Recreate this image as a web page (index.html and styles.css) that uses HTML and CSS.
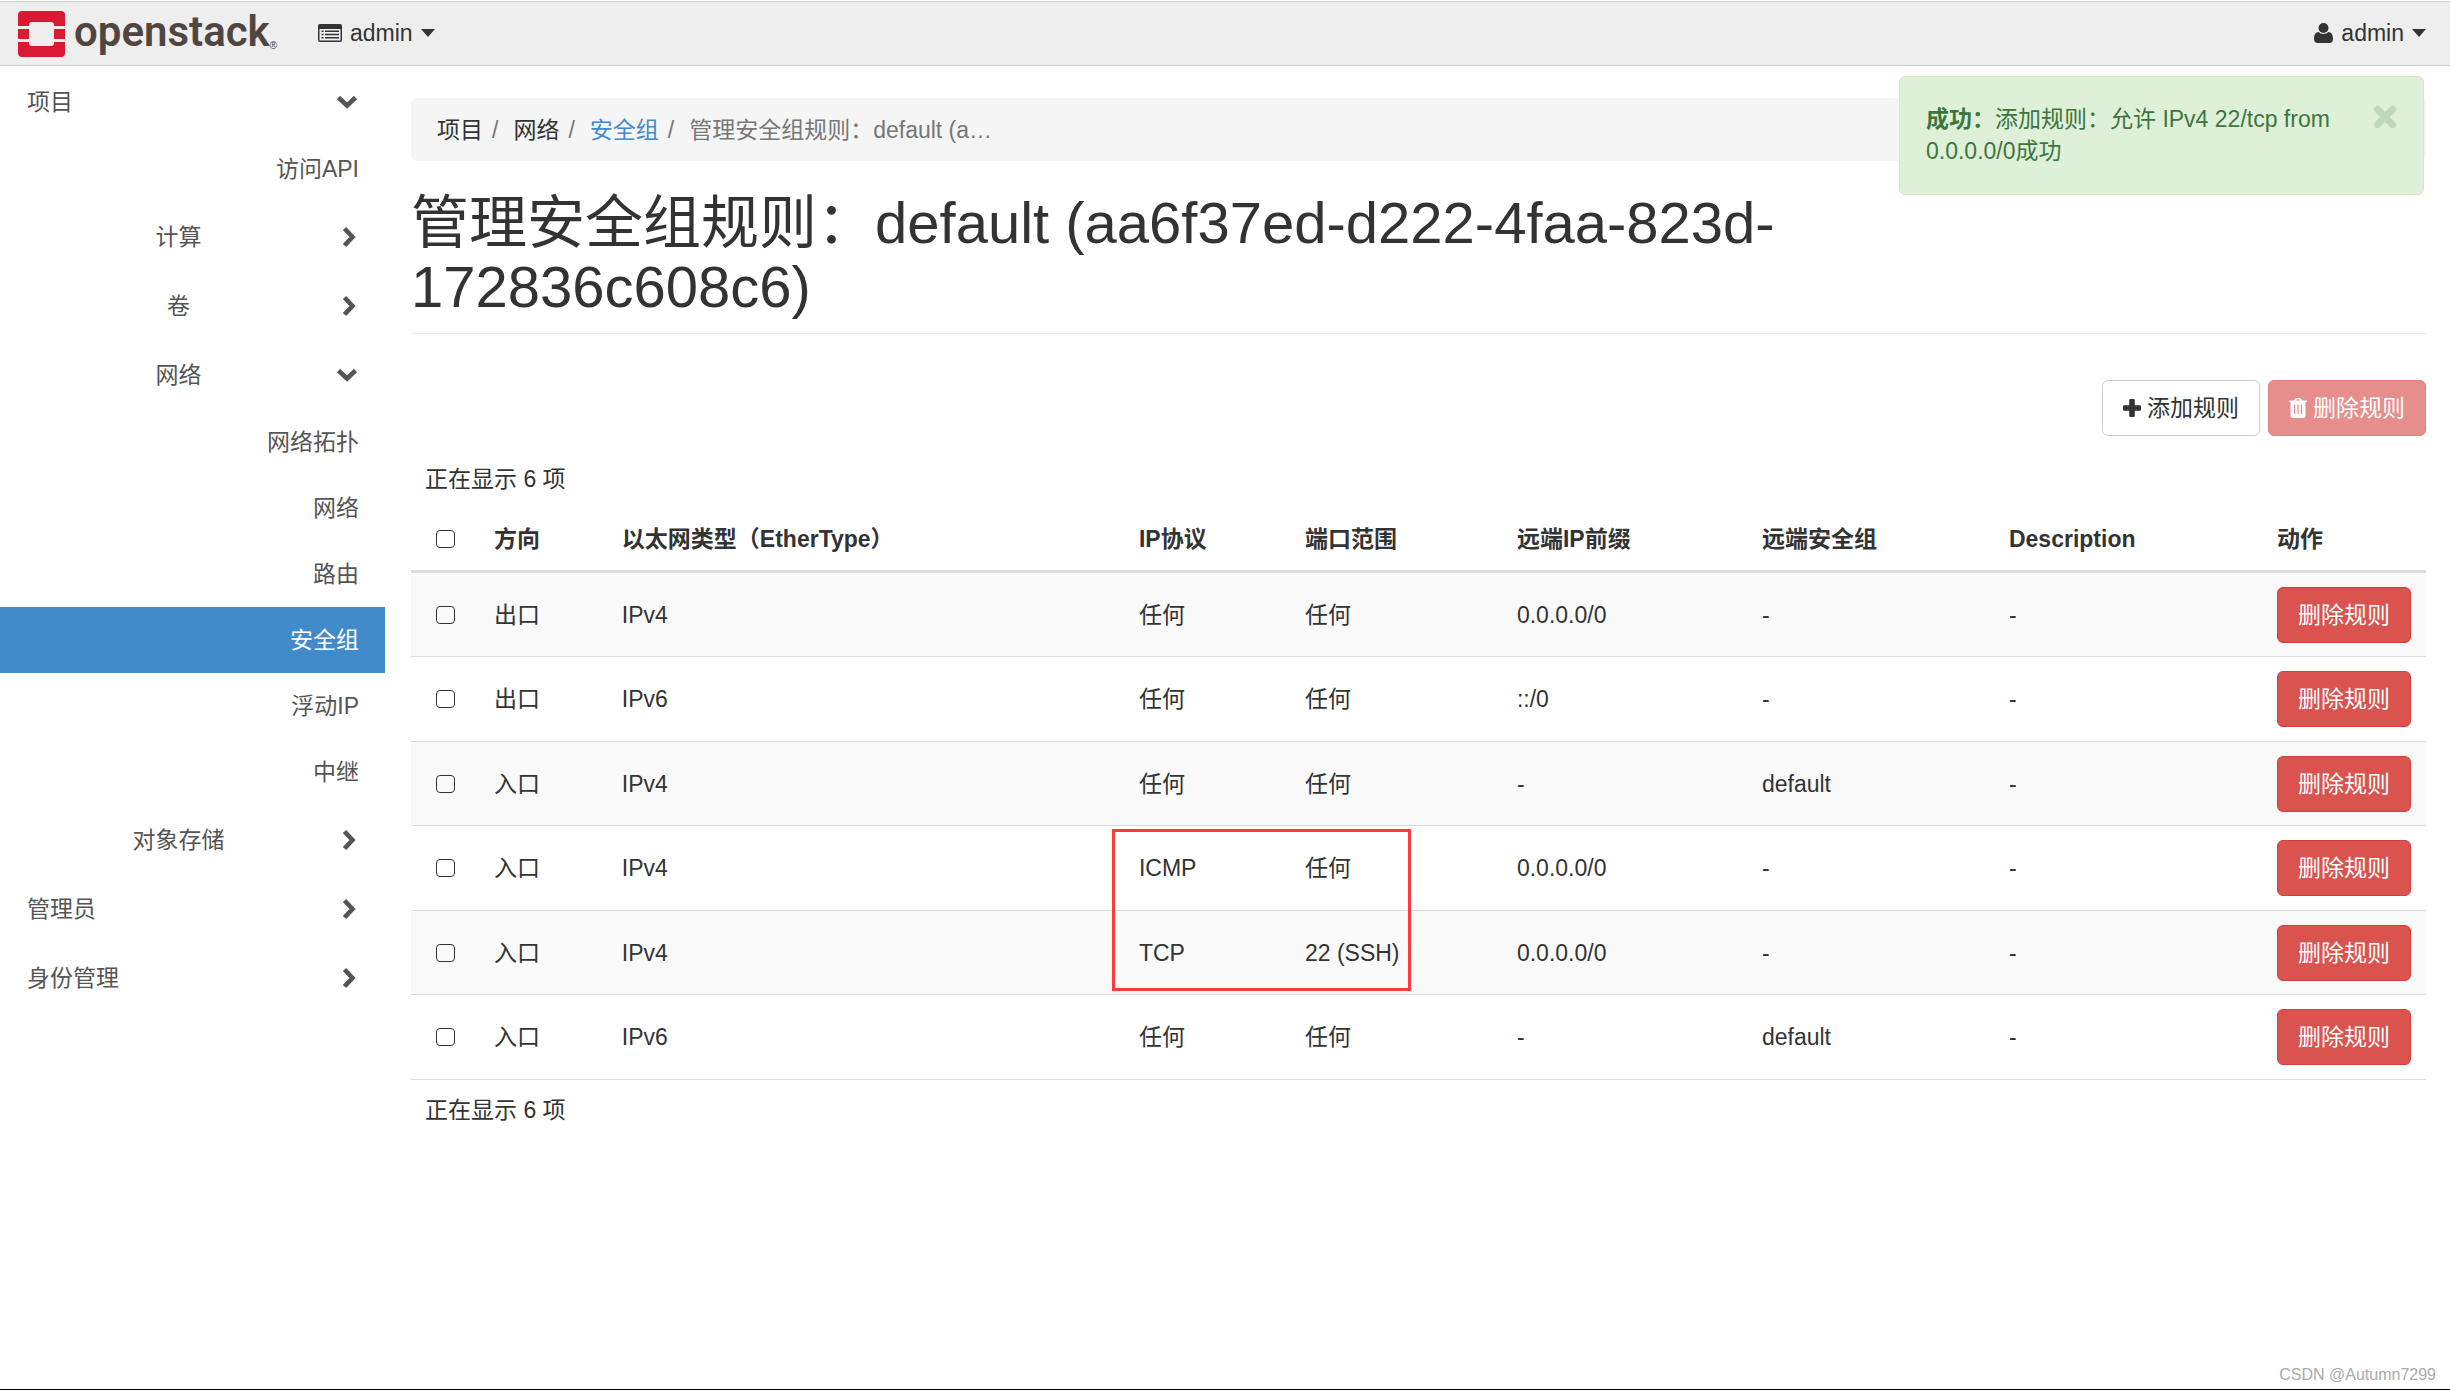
FILE: index.html
```html
<!DOCTYPE html>
<html lang="zh-CN">
<head>
<meta charset="utf-8">
<meta name="viewport" content="width=device-width, initial-scale=1">
<title>管理安全组规则 - OpenStack Dashboard</title>
<link rel="stylesheet" href="styles.css">
</head>
<body>
<svg class="sprite" aria-hidden="true">
  <symbol id="right" viewBox="0 0 14 22"><path d="M2.5 2.5 10.5 11l-8 8.500" fill="none" stroke="currentColor" stroke-width="4.600"/></symbol>
  <symbol id="down" viewBox="0 0 22 14"><path d="M2.500 2.500 11 10.500l8.500-8" fill="none" stroke="currentColor" stroke-width="4.600"/></symbol>
  <symbol id="caret" viewBox="0 0 14 8"><path d="M0 0h14L7 8z" fill="currentColor"/></symbol>
</svg>

<header class="topbar">
  <a class="brand" href="#" aria-label="openstack">
    <svg class="brand-mark" viewBox="0 0 47 46" aria-hidden="true">
      <path fill="#da1a32" d="M4 0h39a4 4 0 0 1 4 4v11H36v-1a3 3 0 0 0-3-3H14a3 3 0 0 0-3 3v1H0V4a4 4 0 0 1 4-4zM0 18h11v10H0zM36 18h11v10H36zM0 31h11v1a3 3 0 0 0 3 3h19a3 3 0 0 0 3-3v-1h11v11a4 4 0 0 1-4 4H4a4 4 0 0 1-4-4z"/>
    </svg>
    <span class="brand-name">openstack</span><span class="brand-reg">®</span>
  </a>
  <button class="menu" type="button">
    <svg class="icon-list" viewBox="0 0 24 18" aria-hidden="true">
      <path fill="currentColor" fill-rule="evenodd" d="M2 0h20a2 2 0 0 1 2 2v14a2 2 0 0 1-2 2H2a2 2 0 0 1-2-2V2a2 2 0 0 1 2-2zM1.500 5v11q0 .5.5.5h20q.5 0 .5-.5V5zM3.500 6.500h2V8h-2zM7 6.500h14V8H7zM3.500 9.800h2v1.500h-2zM7 9.800h14v1.500H7zM3.500 13h2v1.500h-2zM7 13h14v1.500H7z"/>
    </svg>
    admin
    <svg class="caret" aria-hidden="true"><use href="#caret"/></svg>
  </button>
  <button class="menu menu-user" type="button">
    <svg class="icon-user" viewBox="0 0 19 20" aria-hidden="true">
      <path fill="currentColor" d="M9.500 0a5 5 0 0 1 0 10 5 5 0 0 1 0-10zM4.500 9c1.500 1.300 3 2 5 2s3.500-.7 5-2c3 .3 4.500 3 4.500 7 0 2.500-1.500 4-3.500 4h-12C1.500 20 0 18.500 0 16c0-4 1.500-6.700 4.500-7z"/>
    </svg>
    admin
    <svg class="caret" aria-hidden="true"><use href="#caret"/></svg>
  </button>
</header>

<div class="alert" role="alert">
  <p><strong>成功：</strong>添加规则：允许 IPv4 22/tcp from 0.0.0.0/0成功</p>
  <button class="alert-close" type="button" aria-label="关闭">
    <svg viewBox="0 0 24 24" aria-hidden="true"><path d="M4.500 4.500l15 15M19.500 4.500l-15 15" stroke="currentColor" stroke-width="7" stroke-linecap="round"/></svg>
  </button>
</div>

<div class="layout">
  <nav class="sidebar">
    <a class="group" href="#"><span>项目</span><svg class="down"><use href="#down"/></svg></a>
    <a class="item" href="#">访问API</a>
    <a class="group sub" href="#"><span>计算</span><svg class="right"><use href="#right"/></svg></a>
    <a class="group sub" href="#"><span>卷</span><svg class="right"><use href="#right"/></svg></a>
    <a class="group sub" href="#"><span>网络</span><svg class="down"><use href="#down"/></svg></a>
    <a class="item" href="#">网络拓扑</a>
    <a class="item" href="#">网络</a>
    <a class="item" href="#">路由</a>
    <a class="item active" href="#">安全组</a>
    <a class="item" href="#">浮动IP</a>
    <a class="item" href="#">中继</a>
    <a class="group sub" href="#"><span>对象存储</span><svg class="right"><use href="#right"/></svg></a>
    <a class="group" href="#"><span>管理员</span><svg class="right"><use href="#right"/></svg></a>
    <a class="group" href="#"><span>身份管理</span><svg class="right"><use href="#right"/></svg></a>
  </nav>

  <main class="content">
    <ol class="breadcrumb">
      <li>项目</li>
      <li>网络</li>
      <li><a href="#">安全组</a></li>
      <li class="current">管理安全组规则：default (a…</li>
    </ol>
    <div class="page-header">
      <h1>管理安全组规则：default (aa6f37ed-d222-4faa-823d-172836c608c6)</h1>
    </div>

    <div class="actions">
      <button class="btn" type="button">
        <svg class="icon-plus" viewBox="0 0 18 18" aria-hidden="true"><path fill="currentColor" d="M7.500 0h3a1.300 1.300 0 0 1 1.300 1.300v5h5A1.300 1.300 0 0 1 18 7.500v3a1.300 1.300 0 0 1-1.200 1.300h-5v5a1.300 1.300 0 0 1-1.300 1.200h-3a1.300 1.300 0 0 1-1.300-1.200v-5h-5A1.300 1.300 0 0 1 0 10.500v-3a1.300 1.300 0 0 1 1.200-1.200h5v-5A1.300 1.300 0 0 1 7.500 0z"/></svg>
        添加规则
      </button>
      <button class="btn btn-danger" type="button" disabled>
        <svg class="icon-trash" viewBox="0 0 18 20" aria-hidden="true"><path fill="currentColor" fill-rule="evenodd" d="M6.500 0h5L13 2.500h5V4h-1.500v13.500A2.500 2.500 0 0 1 14 20H4a2.500 2.500 0 0 1-2.500-2.500V4H0V2.500h5zM7.200 1.500l-.6 1h4.800l-.6-1zM5 6.500V16h1.200V6.500zM8.400 6.500V16h1.200V6.500zM11.800 6.500V16H13V6.500z"/></svg>
        删除规则
      </button>
    </div>

    <p class="count">正在显示 6 项</p>
    <table class="rules">
      <colgroup>
        <col class="c-check"><col class="c-direction"><col class="c-ether"><col class="c-proto"><col class="c-port"><col class="c-prefix"><col class="c-group"><col class="c-desc"><col class="c-action">
      </colgroup>
      <thead>
        <tr><th><input type="checkbox" aria-label="全选"></th><th>方向</th><th>以太网类型（EtherType）</th><th>IP协议</th><th>端口范围</th><th>远端IP前缀</th><th>远端安全组</th><th>Description</th><th>动作</th></tr>
      </thead>
      <tbody>
        <tr><td><input type="checkbox" aria-label="选择规则 1"></td><td>出口</td><td>IPv4</td><td>任何</td><td>任何</td><td>0.0.0.0/0</td><td>-</td><td>-</td><td><button class="btn btn-danger" type="button">删除规则</button></td></tr>
        <tr><td><input type="checkbox" aria-label="选择规则 2"></td><td>出口</td><td>IPv6</td><td>任何</td><td>任何</td><td>::/0</td><td>-</td><td>-</td><td><button class="btn btn-danger" type="button">删除规则</button></td></tr>
        <tr><td><input type="checkbox" aria-label="选择规则 3"></td><td>入口</td><td>IPv4</td><td>任何</td><td>任何</td><td>-</td><td>default</td><td>-</td><td><button class="btn btn-danger" type="button">删除规则</button></td></tr>
        <tr><td><input type="checkbox" aria-label="选择规则 4"></td><td>入口</td><td>IPv4</td><td class="marked">ICMP<span class="marker"></span></td><td>任何</td><td>0.0.0.0/0</td><td>-</td><td>-</td><td><button class="btn btn-danger" type="button">删除规则</button></td></tr>
        <tr><td><input type="checkbox" aria-label="选择规则 5"></td><td>入口</td><td>IPv4</td><td>TCP</td><td>22 (SSH)</td><td>0.0.0.0/0</td><td>-</td><td>-</td><td><button class="btn btn-danger" type="button">删除规则</button></td></tr>
        <tr><td><input type="checkbox" aria-label="选择规则 6"></td><td>入口</td><td>IPv6</td><td>任何</td><td>任何</td><td>-</td><td>default</td><td>-</td><td><button class="btn btn-danger" type="button">删除规则</button></td></tr>
      </tbody>
    </table>
    <p class="count">正在显示 6 项</p>
  </main>
</div>
<div class="watermark">CSDN @Autumn7299</div>
</body>
</html>
```
FILE: styles.css
```css
* {
  box-sizing: border-box;
}

body {
  margin: 0;
  min-height: 100vh;
  border-bottom: 1px solid #000;
  background: #fff;
  color: #333;
  font: 23px/32px "Liberation Sans", Arial, "Noto Sans CJK SC", sans-serif;
}

a {
  color: #428bca;
  text-decoration: none;
}

button {
  font: inherit;
  color: inherit;
  cursor: pointer;
}

p {
  margin: 0;
}

.sprite {
  display: none;
}

/* Top bar */
.topbar {
  display: flex;
  align-items: center;
  height: 65px;
  margin-top: 1px;
  padding: 0 24px 0 18px;
  background: #eee;
  border: solid #ccc;
  border-width: 1px 0;
}

.brand {
  display: flex;
  align-items: center;
  width: 300px;
  color: #4f4640;
}

.brand-mark {
  flex: none;
  width: 47px;
  height: 46px;
  margin-right: 9px;
}

.brand-name {
  padding-bottom: 4px;
  font: 600 42px/56px Roboto, "Liberation Sans", sans-serif;
}

.brand-reg {
  align-self: flex-end;
  font-size: 10px;
  line-height: 36px;
}

.menu {
  display: flex;
  align-items: center;
  gap: 8px;
  padding: 0 0 2px;
  border: 0;
  background: none;
}

.menu-user {
  margin-left: auto;
}

.icon-list {
  width: 24px;
  height: 18px;
}

.icon-user {
  width: 19px;
  height: 20px;
}

.caret {
  width: 14px;
  height: 8px;
}

/* Message */
.alert {
  position: absolute;
  top: 76px;
  right: 26px;
  display: flex;
  justify-content: space-between;
  align-items: flex-start;
  width: 525px;
  padding: 26px;
  border: 1px solid #d6e9c6;
  border-radius: 6px;
  background: #dff0d8;
  color: #3c763d;
}

.alert p {
  width: 420px;
  padding-bottom: 1px;
}

.alert-close {
  display: flex;
  padding: 2px 0;
  border: 0;
  background: none;
  color: #bdd8ba;
}

.alert-close svg {
  width: 24px;
  height: 24px;
}

/* Page frame */
.layout {
  display: flex;
  align-items: flex-start;
}

.sidebar {
  flex: none;
  width: 385px;
  padding-top: 1px;
}

.group,
.item {
  display: flex;
  align-items: center;
  color: #555;
}

.group {
  height: 69px;
  padding: 0 26px 0 27px;
}

.group span {
  flex: 1;
}

.sub span {
  padding-right: 6px;
  text-align: center;
}

.right {
  width: 14px;
  height: 22px;
  margin: 0 3px 0 6px;
}

.down {
  width: 22px;
  height: 14px;
  margin-right: 1px;
}

.item {
  justify-content: flex-end;
  height: 66px;
  padding: 0 26px;
}

.item.active {
  background: #428bca;
  color: #fff;
}

.content {
  flex: 1;
  min-width: 0;
  padding: 32px 24px 0 26px;
}

.breadcrumb {
  display: flex;
  margin: 0 0 30px;
  padding: 16px 26px 15px;
  border-radius: 6px;
  background: #f5f5f5;
  list-style: none;
}

.breadcrumb li + li::before {
  content: "/";
  padding: 0 15px 0 9px;
  color: #777;
}

.breadcrumb .current {
  color: #777;
}

.page-header {
  padding-bottom: 14px;
  border-bottom: 1px solid #eee;
}

h1 {
  max-width: 75%;
  margin: 0;
  font-size: 58px;
  font-weight: 400;
  line-height: 64px;
}

/* Buttons */
.btn {
  display: inline-flex;
  align-items: center;
  gap: 6px;
  height: 56px;
  padding: 0 20px;
  border: 1px solid #ccc;
  border-radius: 6px;
  background: #fff;
  white-space: nowrap;
}

.btn-danger {
  border-color: #d43f3a;
  background: #d9534f;
  color: #fff;
}

.btn:disabled {
  opacity: 0.65;
}

.actions {
  display: flex;
  justify-content: flex-end;
  gap: 8px;
  margin: 46px 0 27px;
}

.icon-plus {
  width: 18px;
  height: 18px;
}

.icon-trash {
  width: 18px;
  height: 20px;
}

/* Rules table */
.count {
  padding: 0 14px;
}

.rules {
  width: 100%;
  table-layout: fixed;
  border-spacing: 0;
}

.rules + .count {
  margin-top: 14px;
}

.c-check { width: 3.47%; }
.c-direction { width: 6.35%; }
.c-ether { width: 25.66%; }
.c-proto { width: 8.24%; }
.c-port { width: 10.52%; }
.c-prefix { width: 12.16%; }
.c-group { width: 12.26%; }
.c-desc { width: 13.3%; }
.c-action { width: 8.04%; }

.rules th,
.rules td {
  padding: 0 0 0 13px;
  text-align: left;
  white-space: nowrap;
}

.rules th {
  height: 78px;
  padding-top: 13px;
  border-bottom: 3px solid #ddd;
}

.rules td {
  height: 84px;
  border-bottom: 1px solid #ddd;
}

.rules tr:nth-child(even) td {
  height: 85px;
}

.rules tbody tr:nth-child(odd) {
  background: #f9f9f9;
}

.rules .btn {
  vertical-align: middle;
}

.rules input {
  display: block;
  appearance: none;
  width: 19px;
  height: 18px;
  margin: 0 0 0 12px;
  border: 1px solid #333;
  border-radius: 4px;
}

.marked {
  position: relative;
}

.marker {
  position: absolute;
  top: 3px;
  left: -14px;
  width: 299px;
  height: 162px;
  border: 3px solid #fc3b3b;
  pointer-events: none;
}

.watermark {
  position: absolute;
  right: 14px;
  bottom: 3px;
  color: #aaa;
  font-size: 16px;
  line-height: 24px;
}
```
